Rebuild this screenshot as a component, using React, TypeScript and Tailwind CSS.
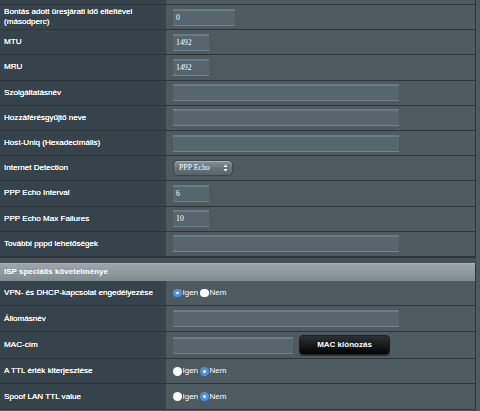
import React from "react";

const sans = { fontFamily: '"Liberation Sans", Arial, sans-serif' };

function Field({ w, value = "" }: { w: string; value?: string }) {
  return (
    <div
      className={`${w} h-[17px] flex items-center px-[3px] bg-[#56666c] border-t-2 border-b border-t-[#6b7b81] border-b-[#71838a] text-white text-[7.8px] font-['Liberation_Serif',serif]`}
    >
      {value}
    </div>
  );
}

function Radio({ on }: { on: boolean }) {
  return on ? (
    <span className="w-[8.5px] h-[8.5px] rounded-full bg-[#4a8fe8] flex items-center justify-center">
      <span className="w-[2.5px] h-[2.5px] rounded-full bg-white" />
    </span>
  ) : (
    <span className="w-[8.5px] h-[8.5px] rounded-full bg-white" />
  );
}

function YesNo({ yes }: { yes: boolean }) {
  return (
    <div className="flex items-center text-white text-[8px]" style={sans}>
      <Radio on={yes} />
      <span className="ml-[1px] mr-[2px]">Igen</span>
      <Radio on={!yes} />
      <span className="ml-[1px]">Nem</span>
    </div>
  );
}

function Row({
  label,
  children,
  h = "h-[25.2px]",
}: {
  label: React.ReactNode;
  children?: React.ReactNode;
  h?: string;
}) {
  return (
    <div className={`flex ${h} border-b border-[#2c3539]`}>
      <div
        className="w-[166px] shrink-0 bg-[#36434a] flex items-center pl-[4px] text-white text-[8.1px] leading-[10px] [text-shadow:0_0_0.4px_#fff]"
        style={sans}
      >
        {label}
      </div>
      <div className="flex-1 bg-[#4d5b60] flex items-center pl-[7px] gap-[6px]">
        {children}
      </div>
    </div>
  );
}

export default function App() {
  return (
    <div className="w-[480px] h-[411px] bg-[#4d5a5f] overflow-hidden">
      <div className="w-[476px] border-r border-[#2c3539]">
        {/* previous rows, cut off */}
        <div className="flex h-[5px] border-b border-[#2c3539]">
          <div className="w-[166px] bg-[#36434a]" />
          <div className="flex-1 bg-[#4d5b60]" />
        </div>

        <Row
          label={
            <span>
              Bontás adott üresjárati idő elteltével
              <br />
              (másodperc)
            </span>
          }
        >
          <Field w="w-[62px]" value="0" />
        </Row>
        <Row label="MTU">
          <Field w="w-[36px]" value="1492" />
        </Row>
        <Row label="MRU">
          <Field w="w-[36px]" value="1492" />
        </Row>
        <Row label="Szolgáltatásnév">
          <Field w="w-[226px]" />
        </Row>
        <Row label="Hozzáférésgyűjtő neve">
          <Field w="w-[226px]" />
        </Row>
        <Row label="Host-Uniq (Hexadecimális)">
          <Field w="w-[226px]" />
        </Row>
        <Row label="Internet Detection">
          <div className="w-[60px] h-[16px] rounded-[5px] border border-[#3b464a] bg-gradient-to-b from-[#86939a] via-[#66747a] to-[#56636a] flex items-center justify-between pl-[5px] pr-[4px] text-white text-[7.8px] font-['Liberation_Serif',serif] shadow-[inset_0_1px_0_rgba(255,255,255,0.3)]">
            <span>PPP Echo</span>
            <svg width="5" height="8" viewBox="0 0 5 8">
              <path d="M2.5 0.5 L4.5 3 L0.5 3 Z" fill="#fff" />
              <path d="M2.5 7.5 L4.5 5 L0.5 5 Z" fill="#fff" />
            </svg>
          </div>
        </Row>
        <Row label="PPP Echo Interval">
          <Field w="w-[36px]" value="6" />
        </Row>
        <Row label="PPP Echo Max Failures">
          <Field w="w-[36px]" value="10" />
        </Row>
        <Row label="További pppd lehetőségek">
          <Field w="w-[226px]" />
        </Row>
      </div>

      {/* gap between tables */}
      <div className="h-[6px] w-[476px] bg-[#454f53] border-t border-[#2c3539]" />

      <div className="w-[476px] border-r border-[#2c3539]">
        <div
          className="h-[18px] flex items-center pl-[4px] bg-gradient-to-b from-[#9aa6aa] to-[#808c90] border-t border-[#a9b3b6] text-white font-bold text-[8px]"
          style={sans}
        >
          ISP speciális követelménye
        </div>
        <Row label="VPN- és DHCP-kapcsolat engedélyezése" h="h-[25.3px]">
          <YesNo yes={true} />
        </Row>
        <Row label="Állomásnév" h="h-[25.7px]">
          <Field w="w-[226px]" />
        </Row>
        <Row label="MAC-cím" h="h-[27.3px]">
          <Field w="w-[120px]" />
          <button
            className="w-[91px] h-[20px] rounded-[4px] bg-gradient-to-b from-[#2e3133] to-[#050505] border border-[#1b1f21] text-white font-bold text-[8px] shadow-[0_1px_1px_rgba(0,0,0,0.4)]"
            style={sans}
          >
            MAC klónozás
          </button>
        </Row>
        <Row label="A TTL érték kiterjesztése" h="h-[25.3px]">
          <YesNo yes={false} />
        </Row>
        <Row label="Spoof LAN TTL value">
          <YesNo yes={false} />
        </Row>
      </div>
    </div>
  );
}
